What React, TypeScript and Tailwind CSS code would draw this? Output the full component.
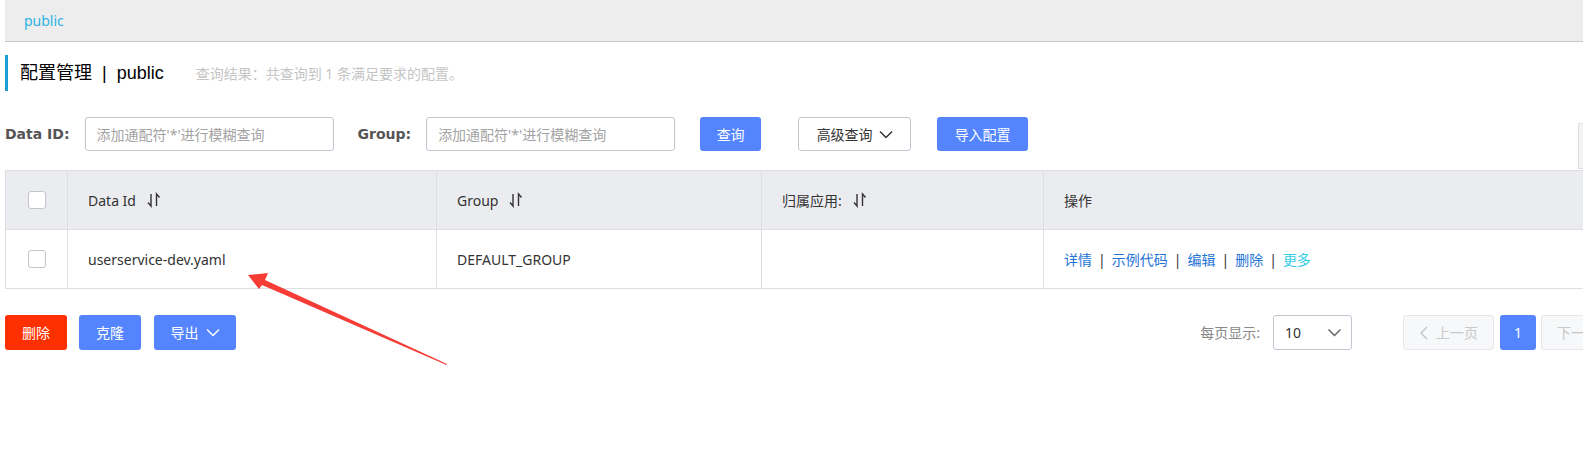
import React from 'react';

const SortIcon = () => (
  <svg width="16" height="16" viewBox="0 0 16 16" className="ml-[10px]" fill="none" stroke="#333" strokeWidth="1.4">
    <path d="M5 2 V14 L2 10.5" />
    <path d="M10.5 14 V2 L13.5 5.5" />
  </svg>
);

const Chevron = ({ color = '#333', w = 14 }: { color?: string; w?: number }) => (
  <svg width={w} height="9" viewBox="0 0 14 9" fill="none" stroke={color} strokeWidth="1.5">
    <path d="M1 1.5 L7 7.5 L13 1.5" />
  </svg>
);

const Checkbox = () => <div className="w-[18px] h-[18px] rounded-[3px] border border-[#c4c6cf] bg-white" />;

const Input = () => (
  <div className="w-[249px] h-[34px] border border-[#c4c6cf] rounded-[3px] flex items-center px-[11px] text-[14px] text-[#a3a3a3] bg-white">
    添加通配符'*'进行模糊查询
  </div>
);

const cell = 'border-r border-b border-[#dcdee3] flex items-center';

export default function App() {
  return (
    <div
      className="relative w-[1583px] h-[452px] overflow-hidden bg-white pl-[5px] text-[#333]"
      style={{ fontFamily: '"Noto Sans", "Noto Sans CJK SC", sans-serif' }}
    >
      {/* top breadcrumb */}
      <div className="h-[42px] bg-[#ededed] border-b border-[#c8c8c8] flex items-center pl-[19px] text-[14px] text-[#2bb4e4]">
        public
      </div>

      {/* title */}
      <div className="mt-[13px] h-[36px] border-l-[3px] border-[#1a9fd5] flex items-center pl-[12px]">
        <span
          className="text-[18px] text-black"
          style={{ fontFamily: '"Liberation Sans", "Noto Sans CJK SC", sans-serif' }}
        >
          配置管理<span className="mx-[10px]">|</span>public
        </span>
        <span className="ml-[32px] text-[14px] text-[#c5c5c5]">查询结果：共查询到 1 条满足要求的配置。</span>
      </div>

      {/* search row */}
      <div className="mt-[26px] h-[34px] flex items-center">
        <span className="text-[14px] font-bold text-[#555]" style={{ fontFamily: '"DejaVu Sans", sans-serif' }}>Data ID:</span>
        <div className="ml-[15px]"><Input /></div>
        <span className="ml-[24px] text-[14px] font-bold text-[#555]" style={{ fontFamily: '"DejaVu Sans", sans-serif' }}>Group:</span>
        <div className="ml-[15px]"><Input /></div>
        <button className="ml-[25px] w-[61px] h-[34px] rounded-[3px] bg-[#5584ff] text-white text-[14px]">查询</button>
        <button className="ml-[37px] w-[113px] h-[34px] rounded-[3px] border border-[#c4c6cf] bg-white text-[14px] text-[#333] flex items-center justify-center gap-[6px]">
          高级查询 <Chevron />
        </button>
        <button className="ml-[26px] w-[91px] h-[34px] rounded-[3px] bg-[#5584ff] text-white text-[14px]">导入配置</button>
        <div className="ml-auto -mr-[40px] self-start mt-[6px] w-[45px] h-[46px] shrink-0 border border-[#dcdee3] bg-[#f4f4f4]" />
      </div>

      {/* table */}
      <div className="mt-[19px] border-l border-t border-[#dcdee3] grid grid-cols-[62px_369px_325px_282px_1fr] text-[14px]">
        <div className={`${cell} bg-[#ebecf0] h-[59px] justify-center`}><Checkbox /></div>
        <div className={`${cell} bg-[#ebecf0] pl-[20px]`}>Data Id <SortIcon /></div>
        <div className={`${cell} bg-[#ebecf0] pl-[20px]`}>Group <SortIcon /></div>
        <div className={`${cell} bg-[#ebecf0] pl-[20px]`}>归属应用: <SortIcon /></div>
        <div className={`${cell} bg-[#ebecf0] pl-[20px] border-r-0`}>操作</div>

        <div className={`${cell} h-[59px] justify-center`}><Checkbox /></div>
        <div className={`${cell} pl-[20px]`}>userservice-dev.yaml</div>
        <div className={`${cell} pl-[20px]`}>DEFAULT_GROUP</div>
        <div className={`${cell}`} />
        <div className={`${cell} pl-[20px] border-r-0 text-[#2474d6]`}>
          <span>详情</span>
          <span className="mx-[6px] text-[#333]">|</span>
          <span>示例代码</span>
          <span className="mx-[6px] text-[#333]">|</span>
          <span>编辑</span>
          <span className="mx-[6px] text-[#333]">|</span>
          <span>删除</span>
          <span className="mx-[6px] text-[#333]">|</span>
          <span className="text-[#33cde5]">更多</span>
        </div>
      </div>

      {/* bottom bar */}
      <div className="mt-[26px] h-[35px] flex items-center text-[14px]">
        <button className="w-[62px] h-[35px] rounded-[3px] bg-[#ff3000] text-white">删除</button>
        <button className="ml-[12px] w-[62px] h-[35px] rounded-[3px] bg-[#5584ff] text-white">克隆</button>
        <button className="ml-[13px] w-[82px] h-[35px] rounded-[3px] bg-[#5584ff] text-white flex items-center justify-center gap-[7px]">
          导出 <Chevron color="#fff" />
        </button>

        <div className="ml-auto -mr-[49px] flex items-center shrink-0">
          <span className="text-[#888]">每页显示:</span>
          <div className="ml-[13px] w-[79px] h-[35px] border border-[#c4c6cf] rounded-[3px] flex items-center justify-between pl-[11px] pr-[9px]">
            <span className="text-[#333]">10</span>
            <Chevron color="#666" w={15} />
          </div>
          <div className="ml-[51px] w-[91px] h-[35px] border border-[#e6e7eb] bg-[#f7f8fa] rounded-[3px] flex items-center justify-center gap-[8px] text-[#c8c8c8]">
            <svg width="9" height="14" viewBox="0 0 9 14" fill="none" stroke="#c8c8c8" strokeWidth="1.5">
              <path d="M8 1 L2 7 L8 13" />
            </svg>
            上一页
          </div>
          <div className="ml-[6px] w-[36px] h-[35px] rounded-[3px] bg-[#5584ff] text-white flex items-center justify-center">1</div>
          <div className="ml-[5px] w-[91px] h-[35px] border border-[#e6e7eb] bg-[#f7f8fa] rounded-[3px] flex items-center justify-center gap-[8px] text-[#c8c8c8]">
            下一页
            <svg width="9" height="14" viewBox="0 0 9 14" fill="none" stroke="#c8c8c8" strokeWidth="1.5">
              <path d="M1 1 L7 7 L1 13" />
            </svg>
          </div>
        </div>
      </div>

      {/* annotation arrow */}
      <svg className="absolute left-0 top-0 pointer-events-none" width="1583" height="452">
        <path d="M248 275 L268 273 L265 280 L447 364 L446.5 365 L262 285 L259 289 Z" fill="#f53d36" />
      </svg>
    </div>
  );
}
